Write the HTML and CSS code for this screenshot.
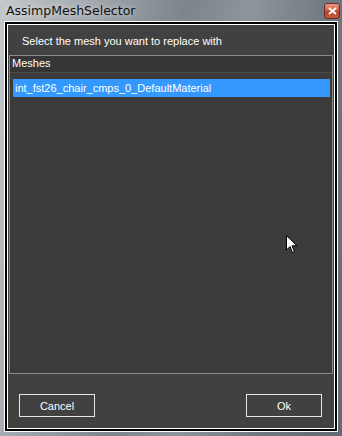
FILE: index.html
```html
<!DOCTYPE html>
<html lang="en">
<head>
    <meta charset="UTF-8">
    <title>AssimpMeshSelector</title>
    <link rel="stylesheet" href="styles.css">
</head>
<body>
    <div class="window">
        <header class="titlebar">
            <span class="title">AssimpMeshSelector</span>
            <button class="close-btn" aria-label="Close">
                <svg width="9" height="8" viewBox="0 0 9 8">
                    <path d="M1 1 L8 7 M8 1 L1 7" stroke="#fff" stroke-width="2"/>
                </svg>
            </button>
        </header>
        <div class="frame">
            <div class="client">
                <p class="prompt">Select the mesh you want to replace with</p>
                <div class="listbox">
                    <div class="list-header">Meshes</div>
                    <ul class="list-items">
                        <li class="item selected">int_fst26_chair_cmps_0_DefaultMaterial</li>
                    </ul>
                </div>
                <div class="actions">
                    <button class="btn">Cancel</button>
                    <button class="btn">Ok</button>
                </div>
                <svg class="cursor" width="12" height="19" viewBox="0 0 12 19">
                    <path d="M0.5 0.5 L0.5 15 L4 11.5 L6.5 17.5 L8.5 16.5 L6 10.8 L11 10.8 Z" fill="#fff" stroke="#000" stroke-width="1"/>
                </svg>
            </div>
        </div>
    </div>
</body>
</html>
```

FILE: styles.css
```css
body {
    margin: 0;
    font-family: "Liberation Sans", Arial, sans-serif;
}

.window {
    width: 342px;
    height: 436px;
    box-sizing: border-box;
    padding: 0 4px 4px 4px;
    background: linear-gradient(100deg, #c4c8cc 0%, #9da3a9 25%, #7c848c 45%, #8e969c 60%, #6f7880 80%, #5f6a74 100%);
    display: flex;
    flex-direction: column;
}

.titlebar {
    height: 21px;
    display: flex;
    align-items: center;
    justify-content: space-between;
}

.title {
    font-family: "DejaVu Sans", sans-serif;
    font-size: 12.5px;
    color: #111;
    margin-left: 2px;
    margin-top: -1px;
    text-shadow: 0 0 6px rgba(255, 255, 255, 0.8);
}

.close-btn {
    width: 16px;
    height: 16px;
    margin-top: 1px;
    margin-right: -2px;
    padding: 0;
    border: 1px solid #6b2e25;
    border-radius: 3px;
    background: linear-gradient(to bottom, #e89a86 0%, #d06048 45%, #b5402a 55%, #c85a40 100%);
    display: flex;
    align-items: center;
    justify-content: center;
}

.frame {
    flex: 1;
    border: 1px solid #fff;
    background: #000;
    padding: 2px;
    display: flex;
}

.client {
    position: relative;
    flex: 1;
    border: 1px solid #fff;
    background: #414141;
    display: flex;
    flex-direction: column;
}

.prompt {
    margin: 10px 0 0 14px;
    font-size: 11px;
    line-height: 13px;
    color: #fff;
}

.listbox {
    margin: 7px 0 0 1px;
    width: 324px;
    height: 319px;
    box-sizing: border-box;
    border: 1px solid #8a8a8a;
    background: #3b3b3b;
}

.list-header {
    height: 16px;
    padding-left: 2px;
    font-size: 11px;
    line-height: 14px;
    color: #fff;
    background: #363636;
    border-bottom: 1px solid #4c4c4c;
}

.list-items {
    list-style: none;
    margin: 6px 0 0 3px;
    padding: 0;
}

.item {
    width: 317px;
    height: 18px;
    padding-left: 2px;
    box-sizing: border-box;
    font-size: 11px;
    line-height: 18px;
    color: #fff;
}

.item.selected {
    background: #3399ff;
}

.actions {
    display: flex;
    justify-content: space-between;
    margin: 20px 12px 0 11px;
}

.btn {
    width: 76px;
    height: 23px;
    border: 1px solid #e6e6e6;
    background: #414141;
    color: #fff;
    font-family: "Liberation Sans", Arial, sans-serif;
    font-size: 11px;
    padding: 0;
}

.cursor {
    position: absolute;
    left: 278px;
    top: 210px;
}
```
